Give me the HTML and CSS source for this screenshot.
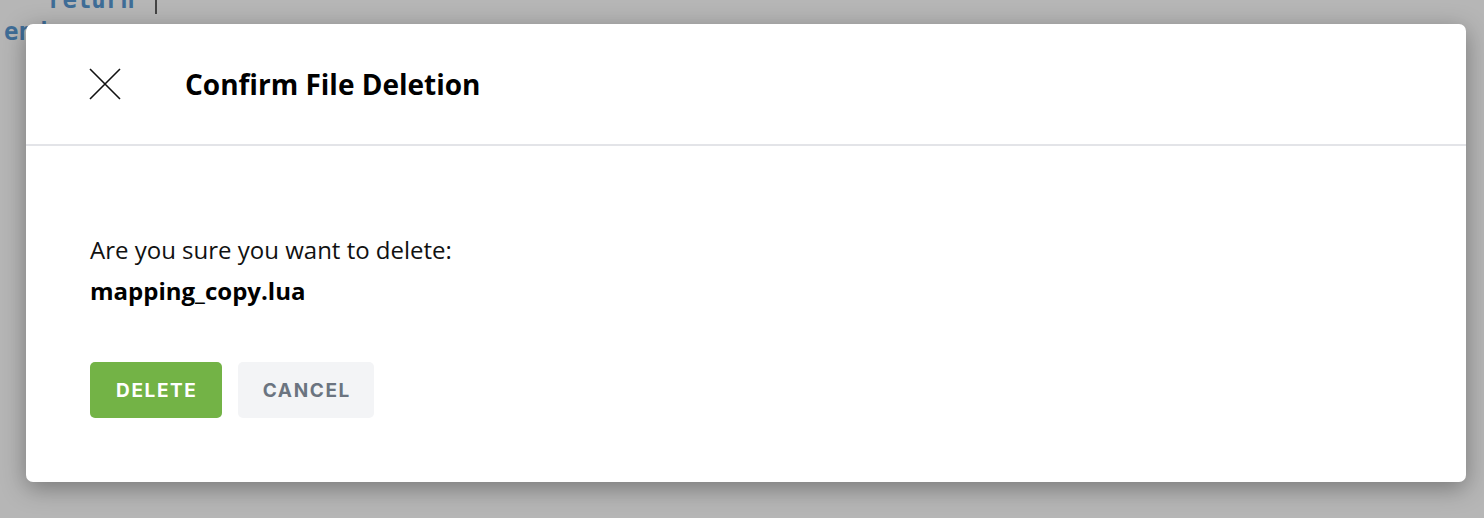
FILE: index.html
```html
<!DOCTYPE html>
<html>
<head>
<meta charset="utf-8">
<link rel="stylesheet" href="styles.css">
</head>
<body>
<div class="editor">
  <div class="code-line indent"><span class="kw">return</span> <span class="cursor"></span></div>
  <div class="code-line"><span class="kw">end</span></div>
</div>
<div class="overlay">
  <div class="modal">
    <div class="modal-header">
      <button class="close" aria-label="Close">
        <svg width="32" height="32" viewBox="0 0 32 32"><path d="M1 1 L31 31 M31 1 L1 31" stroke="#111" stroke-width="1.6" fill="none"/></svg>
      </button>
      <h1 class="title">Confirm File Deletion</h1>
    </div>
    <div class="modal-body">
      <p class="question">Are you sure you want to delete:</p>
      <p class="filename">mapping_copy.lua</p>
      <div class="actions">
        <button class="btn btn-delete">DELETE</button>
        <button class="btn btn-cancel">CANCEL</button>
      </div>
    </div>
  </div>
</div>
</body>
</html>
```
FILE: styles.css
```css
html, body {
  margin: 0;
  padding: 0;
  width: 1484px;
  height: 518px;
  overflow: hidden;
  background: #b6b6b6;
  font-family: "Open Sans", "Noto Sans", sans-serif;
}
.editor {
  position: absolute;
  top: -16px;
  left: 4px;
  font-family: "DejaVu Sans Mono", monospace;
  font-size: 24px;
  line-height: 32px;
  font-weight: bold;
  color: #3f6d97;
}
.code-line.indent { padding-left: 44px; }
.cursor {
  display: inline-block;
  width: 2px;
  height: 28px;
  background: #444;
  vertical-align: -6px;
  margin-left: 6px;
}
.overlay {
  position: absolute;
  inset: 0;
  padding: 24px 18px 36px 26px;
}
.modal {
  width: 1440px;
  height: 458px;
  background: #fff;
  border-radius: 7px;
  box-shadow: 0 6px 24px rgba(0,0,0,0.35);
  display: flex;
  flex-direction: column;
}
.modal-header {
  height: 120px;
  border-bottom: 2px solid #e3e4e8;
  display: flex;
  align-items: center;
  padding-left: 63px;
}
.close {
  border: 0;
  background: none;
  padding: 0;
  width: 32px;
  height: 32px;
  display: flex;
}
.title {
  margin: 0 0 0 64px;
  font-size: 28px;
  line-height: 38px;
  font-weight: 700;
  color: #000;
}
.modal-body {
  padding: 88px 64px 0 64px;
}
.question {
  margin: 0;
  font-size: 24px;
  line-height: 32px;
  color: #111;
}
.filename {
  margin: 9px 0 0 0;
  font-size: 24px;
  line-height: 32px;
  font-weight: 700;
  color: #000;
}
.actions {
  display: flex;
  gap: 16px;
  margin-top: 55px;
}
.btn {
  height: 56px;
  border: 0;
  border-radius: 5px;
  font-family: "Inter", "Noto Sans", sans-serif;
  font-weight: 700;
  font-size: 19px;
  letter-spacing: 1.6px;
  padding: 0;
  text-indent: 1.6px;
}
.btn-delete {
  width: 132px;
  background: #73b346;
  color: #fff;
}
.btn-cancel {
  width: 136px;
  background: #f3f4f6;
  color: #6b7480;
}
```
